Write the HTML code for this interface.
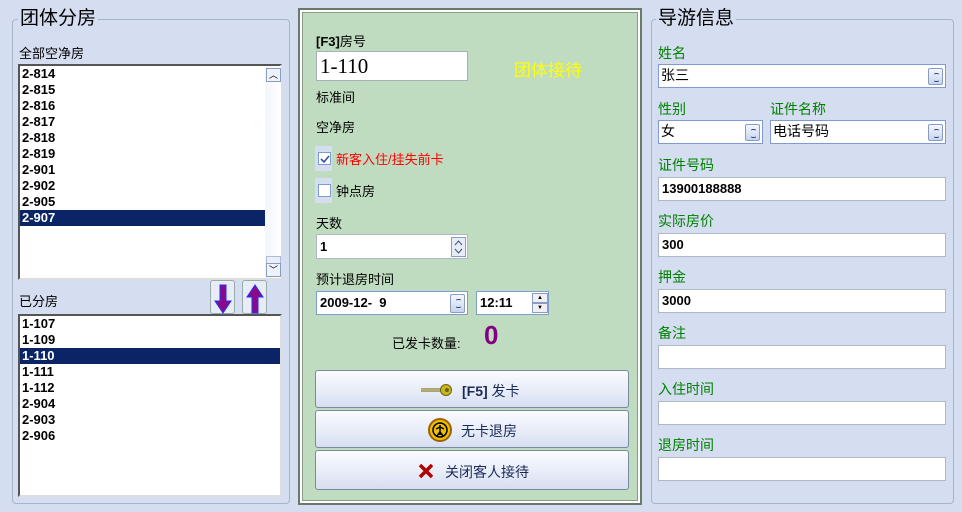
<!DOCTYPE html>
<html><head><meta charset="utf-8">
<style>
*{margin:0;padding:0;box-sizing:border-box}
body{width:962px;height:512px;background:#d5ddf0;font-family:"Liberation Sans","Noto Sans CJK SC","WenQuanYi Zen Hei",sans-serif;font-size:13px;color:#000;position:relative;overflow:hidden}
.a{position:absolute}
.grp{position:absolute;border:1px solid #a8b4c8;border-radius:4px}
.ttl{position:absolute;background:#d5ddf0;font-size:19px;padding:0 2px;line-height:22px}
.lb{position:absolute;background:#fff;border:2px solid;border-color:#555 #ddd #ddd #555}
.it{height:16px;line-height:16px;font-weight:bold;font-size:13px;padding-left:2px}
.sel{background:#0a2466;color:#fff}
.inp{position:absolute;background:#fff;border:1px solid #b0b8c8;font-size:13px;font-weight:bold;padding-left:3px;line-height:21px}
.cb{position:absolute;background:#fff;border:1px solid #7f9bd1;font-size:14px;padding-left:2px;line-height:21px}
.sp{position:absolute;right:2px;top:3px;width:15px;height:17px;background:linear-gradient(#f4f7ff,#c8d4ee);border:1px solid #8a9cc0;border-radius:2px}
.sp::after{content:"";position:absolute;left:4px;top:4px;width:5px;height:7px;border:1px solid #304080;border-radius:3px;border-left-color:transparent;border-right-color:transparent}
.g{position:absolute;color:#008000;font-size:14px}
.btn{position:absolute;left:315px;width:314px;border:1px solid #7a8aa0;border-radius:3px;background:linear-gradient(#fafbff,#e6ebf7 60%,#d6def0);font-size:14px;color:#1a2a5a}
.btn span{position:absolute}
</style></head><body>

<div class="grp" style="left:12px;top:19px;width:278px;height:485px"></div>
<div class="ttl" style="left:18px;top:8px">团体分房</div>
<div class="a" style="left:19px;top:43px;font-size:13px">全部空净房</div>
<div class="lb" style="left:18px;top:64px;width:264px;height:216px">
 <div class="it">2-814</div><div class="it">2-815</div><div class="it">2-816</div><div class="it">2-817</div><div class="it">2-818</div><div class="it">2-819</div><div class="it">2-901</div><div class="it">2-902</div><div class="it">2-905</div><div class="it sel" style="width:245px">2-907</div>
 <div class="a" style="left:245px;top:0;width:16px;height:212px;background:linear-gradient(90deg,#f2f5fd,#fff)"></div>
 <div class="a" style="left:246px;top:2px;width:15px;height:14px;border:1px solid #8a9cc0;background:#eef2fb;font-size:9px;text-align:center;line-height:12px">︿</div>
 <div class="a" style="left:246px;top:190px;width:15px;height:8px;border:1px solid #b0bcd6;background:#e8eefa"></div>
 <div class="a" style="left:246px;top:197px;width:15px;height:14px;border:1px solid #8a9cc0;background:#eef2fb;font-size:9px;text-align:center;line-height:12px">﹀</div>
</div>
<div class="a" style="left:19px;top:291px;font-size:13px">已分房</div>
<div class="a" style="left:210px;top:280px;width:25px;height:34px;border:1px solid #9aa;border-radius:3px;background:#e8ecf6">
 <svg width="25" height="34"><path d="M9 4h6v16h5l-8 12-8-12h5z" fill="#8a0a8a" stroke="#2030ff" stroke-width="1"/></svg></div>
<div class="a" style="left:242px;top:280px;width:25px;height:34px;border:1px solid #9aa;border-radius:3px;background:#e8ecf6">
 <svg width="25" height="34"><path d="M9 32h6V16h5L12 4 4 16h5z" fill="#8a0a8a" stroke="#2030ff" stroke-width="1"/></svg></div>
<div class="lb" style="left:18px;top:314px;width:264px;height:183px">
 <div class="it">1-107</div><div class="it">1-109</div><div class="it sel">1-110</div><div class="it">1-111</div><div class="it">1-112</div><div class="it">2-904</div><div class="it">2-903</div><div class="it">2-906</div>
</div>

<div class="a" style="left:298px;top:8px;width:344px;height:497px;border:2px solid #6a7a6a;background:#fff"></div>
<div class="a" style="left:302px;top:12px;width:336px;height:489px;background:#c0dcc0;border:1px solid #8a9a8a"></div>
<div class="a" style="left:316px;top:31px;font-size:13px;font-weight:bold">[F3]<span style="font-weight:normal">房号</span></div>
<div class="a" style="left:316px;top:51px;width:152px;height:30px;background:#fff;border:1px solid #a8b0b8;font-family:'Liberation Serif',serif;font-size:21px;line-height:28px;padding-left:3px">1-110</div>
<div class="a" style="left:514px;top:56px;font-size:17px;color:#ffff00">团体接待</div>
<div class="a" style="left:316px;top:87px;font-size:13px">标准间</div>
<div class="a" style="left:316px;top:117px;font-size:13px">空净房</div>
<div class="a" style="left:315px;top:146px;width:17px;height:25px;background:#d5ddf0"></div>
<div class="a" style="left:318px;top:152px;width:13px;height:13px;background:#fff;border:1px solid #7f9bd1"><svg width="11" height="11"><path d="M2 5l3 3 5-6" stroke="#3050b0" stroke-width="1.6" fill="none"/></svg></div>
<div class="a" style="left:336px;top:149px;font-size:13px;color:#ff0000">新客入住/挂失前卡</div>
<div class="a" style="left:315px;top:178px;width:17px;height:25px;background:#d5ddf0"></div>
<div class="a" style="left:318px;top:184px;width:13px;height:13px;background:#fff;border:1px solid #7f9bd1"></div>
<div class="a" style="left:336px;top:181px;font-size:13px">钟点房</div>
<div class="a" style="left:316px;top:213px;font-size:13px">天数</div>
<div class="inp" style="left:316px;top:234px;width:152px;height:25px;line-height:23px">1
 <div class="a" style="left:134px;top:2px;width:15px;height:20px;border:1px solid #8a9cc0;background:#e8ecf6"><svg width="13" height="18"><path d="M3 7l3.5-4 3.5 4M3 11l3.5 4 3.5-4" stroke="#405080" fill="none"/></svg></div></div>
<div class="a" style="left:316px;top:269px;font-size:13px">预计退房时间</div>
<div class="inp" style="left:316px;top:291px;width:152px;height:24px;border-color:#7f9bd1">2009-12-&nbsp;&nbsp;9<div class="sp" style="top:2px;height:19px"></div></div>
<div class="inp" style="left:476px;top:291px;width:73px;height:24px;border-color:#7f9bd1">12:11
 <div class="a" style="left:55px;top:1px;width:16px;height:10px;border:1px solid #8a9cc0;background:#eef0f4;font-size:6px;line-height:8px;text-align:center">▲</div>
 <div class="a" style="left:55px;top:11px;width:16px;height:10px;border:1px solid #8a9cc0;background:#eef0f4;font-size:6px;line-height:8px;text-align:center">▼</div></div>
<div class="a" style="left:392px;top:333px;font-size:13px">已发卡数量:</div>
<div class="a" style="left:484px;top:320px;font-size:26px;font-weight:bold;color:#800080">0</div>

<div class="btn" style="top:370px;height:38px"><svg class="a" style="left:102px;top:11px" width="40" height="16"><path d="M3 8h20" stroke="#555" stroke-width="3"/><path d="M3 8h20" stroke="#e0d040" stroke-width="1.5"/><circle cx="28" cy="8" r="5.5" fill="#c8b820" stroke="#706010"/><circle cx="29" cy="8" r="2" fill="#706010"/></svg><span style="left:146px;top:10px"><b>[F5]</b> 发卡</span></div>
<div class="btn" style="top:410px;height:38px"><svg class="a" style="left:111px;top:6px" width="26" height="26"><circle cx="13" cy="13" r="11" fill="#f0c000" stroke="#a06000" stroke-width="2"/><circle cx="13" cy="13" r="7" fill="none" stroke="#000" stroke-width="1.5"/><path d="M13 8v10M9 12l4-2 4 2M10 19l3-4 3 4" stroke="#000" stroke-width="1.5" fill="none"/></svg><span style="left:145px;top:10px">无卡退房</span></div>
<div class="btn" style="top:450px;height:40px"><svg class="a" style="left:102px;top:12px" width="16" height="16"><path d="M2 2l12 12M14 2L2 14" stroke="#b00000" stroke-width="3.5"/></svg><span style="left:129px;top:11px">关闭客人接待</span></div>

<div class="grp" style="left:651px;top:19px;width:303px;height:485px"></div>
<div class="ttl" style="left:656px;top:8px">导游信息</div>
<div class="g" style="left:658px;top:43px">姓名</div>
<div class="cb" style="left:658px;top:64px;width:288px;height:24px">张三<div class="sp"></div></div>
<div class="g" style="left:658px;top:99px">性别</div>
<div class="g" style="left:770px;top:99px">证件名称</div>
<div class="cb" style="left:658px;top:120px;width:105px;height:24px">女<div class="sp"></div></div>
<div class="cb" style="left:770px;top:120px;width:176px;height:24px">电话号码<div class="sp"></div></div>
<div class="g" style="left:658px;top:155px">证件号码</div>
<div class="inp" style="left:658px;top:177px;width:288px;height:24px">13900188888</div>
<div class="g" style="left:658px;top:211px">实际房价</div>
<div class="inp" style="left:658px;top:233px;width:288px;height:24px">300</div>
<div class="g" style="left:658px;top:267px">押金</div>
<div class="inp" style="left:658px;top:289px;width:288px;height:24px">3000</div>
<div class="g" style="left:658px;top:323px">备注</div>
<div class="inp" style="left:658px;top:345px;width:288px;height:24px"></div>
<div class="g" style="left:658px;top:379px">入住时间</div>
<div class="inp" style="left:658px;top:401px;width:288px;height:24px"></div>
<div class="g" style="left:658px;top:435px">退房时间</div>
<div class="inp" style="left:658px;top:457px;width:288px;height:24px"></div>
</body></html>
